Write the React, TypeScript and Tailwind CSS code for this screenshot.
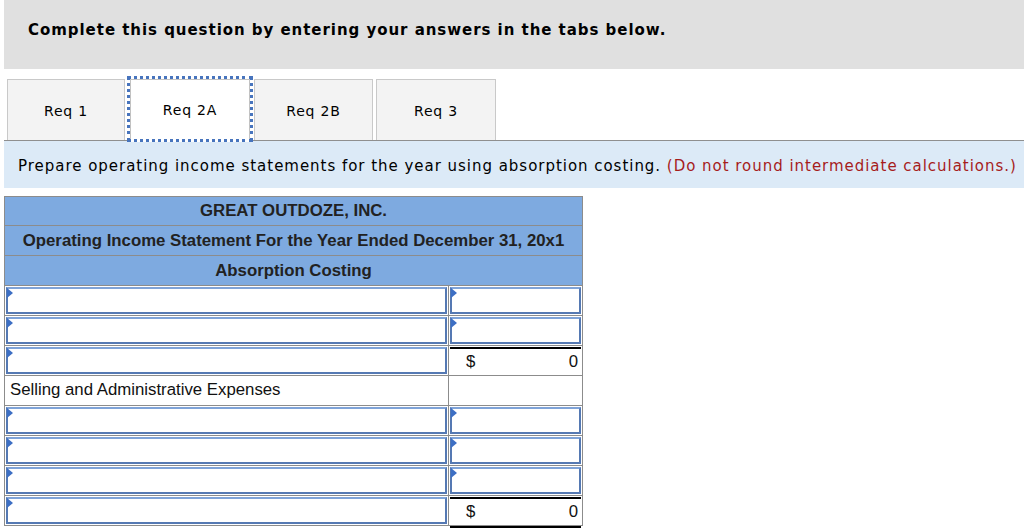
import React from "react";

const Tri = () => (
  <div className="absolute left-[-1px] top-[-1px] w-0 h-0 border-y-[5px] border-y-transparent border-l-[6px] border-l-[#3d6fc4]" />
);

const InputBox = () => (
  <div className="relative h-full w-full bg-white border-2 border-[#5579b3] border-t-[#7fa3d8]">
    <Tri />
  </div>
);

type RowProps = { left?: React.ReactNode; right?: React.ReactNode };

const Row = ({ left, right }: RowProps) => (
  <div className="flex h-[30px] border-b border-[#8c8c8c]">
    <div className="w-[444px] h-full border-r border-[#8c8c8c] p-[1px]">{left}</div>
    <div className="flex-1 h-full p-[1px]">{right}</div>
  </div>
);

const Total = ({ last }: { last?: boolean }) => (
  <div className="h-full w-full flex flex-col border-t-2 border-black">
    <div className="flex-1 flex items-center justify-between pl-[16px] pr-[3px] pb-[2px] text-[16.8px] text-[#111]">
      <span>$</span>
      <span>0</span>
    </div>
    {last ? <div className="h-[3px] border-y border-black" /> : null}
  </div>
);

export default function App() {
  const sans = { fontFamily: '"DejaVu Sans", Verdana, sans-serif' };
  const arial = { fontFamily: '"Liberation Sans", Arial, sans-serif' };
  return (
    <div className="w-[1024px] h-[530px] bg-white overflow-hidden" style={sans}>
      <div className="ml-[4px] h-[69px] bg-[#e0e0e0] pl-[24px] pt-[18px]">
        <span className="text-[15px] font-bold text-black tracking-[0.96px]">
          Complete this question by entering your answers in the tabs below.
        </span>
      </div>
      <div className="mt-[7px] ml-[4px] h-[64px] flex items-end text-[14px] tracking-[0.8px] text-black">
        <div className="ml-[3px] w-[118px] h-[61px] pt-[3px] bg-[#f3f3f3] border border-b-0 border-[#c9c9c9] flex items-center justify-center">
          Req 1
        </div>
        <div className="relative z-10 ml-[2px] mb-[-2px] w-[126px] h-[66px] border-[3px] border-dotted border-[#4774bd] bg-white">
          <div className="h-full w-full pt-[1px] border border-b-0 border-[#c2c2c2] flex items-center justify-center">
            Req 2A
          </div>
        </div>
        <div className="ml-[1px] w-[119px] h-[61px] pt-[3px] bg-[#f3f3f3] border border-b-0 border-[#c9c9c9] flex items-center justify-center">
          Req 2B
        </div>
        <div className="ml-[3px] w-[120px] h-[61px] pt-[3px] bg-[#f3f3f3] border border-b-0 border-[#c9c9c9] flex items-center justify-center">
          Req 3
        </div>
      </div>
      <div className="ml-[4px] h-px bg-[#8f8f8f]" />
      <div className="ml-[4px] h-[47px] bg-[#dceaf7] flex items-center pl-[14px] pt-[4px] text-[15px] tracking-[0.97px] text-black whitespace-nowrap">
        Prepare operating income statements for the year using absorption costing.&nbsp;
        <span className="text-[#a61c1c]">(Do not round intermediate calculations.)</span>
      </div>
      <div className="mt-[8px] ml-[4px] w-[579px] border border-b-0 border-[#8c8c8c]" style={arial}>
        <div className="bg-[#7eaae0] text-[#222] font-bold text-[16.8px] text-center">
          <div className="h-[29px] flex items-center justify-center border-b border-[#8c8c8c]">GREAT OUTDOZE, INC.</div>
          <div className="h-[30px] flex items-center justify-center border-b border-[#8c8c8c]">
            Operating Income Statement For the Year Ended December 31, 20x1
          </div>
          <div className="h-[30px] flex items-center justify-center border-b border-[#8c8c8c]">Absorption Costing</div>
        </div>
        <Row left={<InputBox />} right={<InputBox />} />
        <Row left={<InputBox />} right={<InputBox />} />
        <Row left={<InputBox />} right={<Total />} />
        <Row
          left={
            <div className="h-full flex items-center pl-[4px] pb-[2px] text-[16.8px] text-[#111]">
              Selling and Administrative Expenses
            </div>
          }
          right={null}
        />
        <Row left={<InputBox />} right={<InputBox />} />
        <Row left={<InputBox />} right={<InputBox />} />
        <Row left={<InputBox />} right={<InputBox />} />
        <Row left={<InputBox />} right={<Total last />} />
      </div>
    </div>
  );
}
